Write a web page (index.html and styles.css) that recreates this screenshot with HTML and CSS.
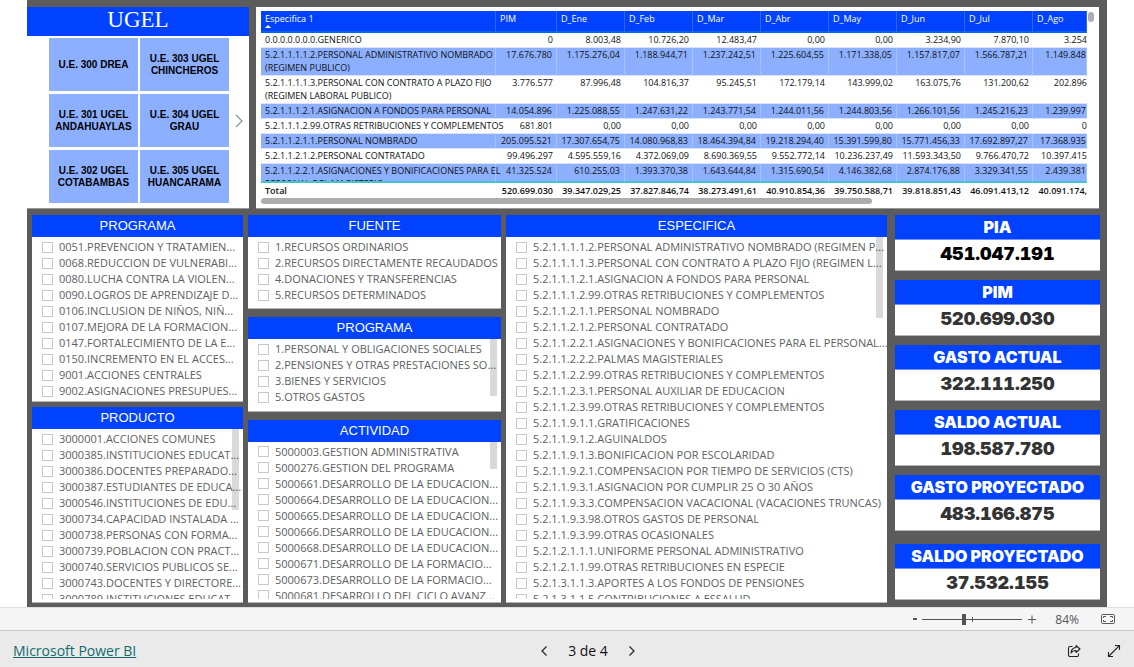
FILE: index.html
```html
<!DOCTYPE html>
<html lang="es">
<head>
<meta charset="utf-8">
<meta name="viewport" content="width=device-width, initial-scale=1">
<title>Microsoft Power BI</title>
<link rel="stylesheet" href="styles.css">
</head>
<body>
<main class="report">
  <div class="top">
    <section class="ugel">
      <h1 class="ugel-title">UGEL</h1>
      <div class="ugel-body">
        <div class="tiles">
          <button class="tile" type="button">U.E. 300 DREA</button>
          <button class="tile" type="button">U.E. 303 UGEL<br>CHINCHEROS</button>
          <button class="tile" type="button">U.E. 301 UGEL<br>ANDAHUAYLAS</button>
          <button class="tile" type="button">U.E. 304 UGEL<br>GRAU</button>
          <button class="tile" type="button">U.E. 302 UGEL<br>COTABAMBAS</button>
          <button class="tile" type="button">U.E. 305 UGEL<br>HUANCARAMA</button>
        </div>
        <button class="tiles-next" type="button" aria-label="Siguiente">
          <svg width="8" height="14" viewBox="0 0 8 14" fill="none" stroke="#8a9099" stroke-width="1.200"><path d="M1 1l6 6-6 6"/></svg>
        </button>
      </div>
    </section>
    <section class="matrix">
      <table class="grid">
        <colgroup><col class="c-name"><col class="c-pim"><col class="c-num"><col class="c-num"><col class="c-num"><col class="c-num"><col class="c-num"><col class="c-num"><col class="c-num"><col></colgroup>
        <thead>
          <tr><th>Especifica 1<span class="sort"></span></th><th>PIM</th><th>D_Ene</th><th>D_Feb</th><th>D_Mar</th><th>D_Abr</th><th>D_May</th><th>D_Jun</th><th>D_Jul</th><th>D_Ago</th></tr>
        </thead>
        <tbody>
          <tr><td>0.0.0.0.0.0.0.GENERICO</td><td>0</td><td>8.003,48</td><td>10.726,20</td><td>12.483,47</td><td>0,00</td><td>0,00</td><td>3.234,90</td><td>7.870,10</td><td>3.254</td></tr>
          <tr><td>5.2.1.1.1.1.2.PERSONAL ADMINISTRATIVO NOMBRADO<br>(REGIMEN PUBLICO)</td><td>17.676.780</td><td>1.175.276,04</td><td>1.188.944,71</td><td>1.237.242,51</td><td>1.225.604,55</td><td>1.171.338,05</td><td>1.157.817,07</td><td>1.566.787,21</td><td>1.149.848</td></tr>
          <tr><td>5.2.1.1.1.1.3.PERSONAL CON CONTRATO A PLAZO FIJO<br>(REGIMEN LABORAL PUBLICO)</td><td>3.776.577</td><td>87.996,48</td><td>104.816,37</td><td>95.245,51</td><td>172.179,14</td><td>143.999,02</td><td>163.075,76</td><td>131.200,62</td><td>202.896</td></tr>
          <tr><td>5.2.1.1.1.2.1.ASIGNACION A FONDOS PARA PERSONAL</td><td>14.054.896</td><td>1.225.088,55</td><td>1.247.631,22</td><td>1.243.771,54</td><td>1.244.011,56</td><td>1.244.803,56</td><td>1.266.101,56</td><td>1.245.216,23</td><td>1.239.997</td></tr>
          <tr><td>5.2.1.1.1.2.99.OTRAS RETRIBUCIONES Y COMPLEMENTOS</td><td>681.801</td><td>0,00</td><td>0,00</td><td>0,00</td><td>0,00</td><td>0,00</td><td>0,00</td><td>0,00</td><td>0</td></tr>
          <tr><td>5.2.1.1.2.1.1.PERSONAL NOMBRADO</td><td>205.095.521</td><td>17.307.654,75</td><td>14.080.968,83</td><td>18.464.394,84</td><td>19.218.294,40</td><td>15.391.599,80</td><td>15.771.456,33</td><td>17.692.897,27</td><td>17.368.935</td></tr>
          <tr><td>5.2.1.1.2.1.2.PERSONAL CONTRATADO</td><td>99.496.297</td><td>4.595.559,16</td><td>4.372.069,09</td><td>8.690.369,55</td><td>9.552.772,14</td><td>10.236.237,49</td><td>11.593.343,50</td><td>9.766.470,72</td><td>10.397.415</td></tr>
          <tr><td><div class="cut">5.2.1.1.2.2.1.ASIGNACIONES Y BONIFICACIONES PARA EL<br>PERSONAL DEL MAGISTERIO</div></td><td>41.325.524</td><td>610.255,03</td><td>1.393.370,38</td><td>1.643.644,84</td><td>1.315.690,54</td><td>4.146.382,68</td><td>2.874.176,88</td><td>3.329.341,55</td><td>2.439.381</td></tr>
        </tbody>
        <tfoot>
          <tr><td>Total</td><td>520.699.030</td><td>39.347.029,25</td><td>37.827.846,74</td><td>38.273.491,61</td><td>40.910.854,36</td><td>39.750.588,71</td><td>39.818.851,43</td><td>46.091.413,12</td><td>40.091.174,</td></tr>
        </tfoot>
      </table>
      <div class="hbar"></div>
      <div class="vbar"></div>
    </section>
  </div>

  <div class="bottom">
    <div class="col col-a">
      <section class="panel p-programa">
        <h2>PROGRAMA</h2>
        <div class="list">
          <label><input type="checkbox">0051.PREVENCION Y TRATAMIEN...</label>
          <label><input type="checkbox">0068.REDUCCION DE VULNERABI...</label>
          <label><input type="checkbox">0080.LUCHA CONTRA LA VIOLEN...</label>
          <label><input type="checkbox">0090.LOGROS DE APRENDIZAJE D...</label>
          <label><input type="checkbox">0106.INCLUSION DE NIÑOS, NIÑ...</label>
          <label><input type="checkbox">0107.MEJORA DE LA FORMACION...</label>
          <label><input type="checkbox">0147.FORTALECIMIENTO DE LA E...</label>
          <label><input type="checkbox">0150.INCREMENTO EN EL ACCES...</label>
          <label><input type="checkbox">9001.ACCIONES CENTRALES</label>
          <label><input type="checkbox">9002.ASIGNACIONES PRESUPUES...</label>
        </div>
      </section>
      <section class="panel p-producto">
        <h2>PRODUCTO</h2>
        <div class="list">
          <span class="thumb thumb-m"></span>
          <label><input type="checkbox">3000001.ACCIONES COMUNES</label>
          <label><input type="checkbox">3000385.INSTITUCIONES EDUCAT...</label>
          <label><input type="checkbox">3000386.DOCENTES PREPARADO...</label>
          <label><input type="checkbox">3000387.ESTUDIANTES DE EDUCA...</label>
          <label><input type="checkbox">3000546.INSTITUCIONES DE EDU...</label>
          <label><input type="checkbox">3000734.CAPACIDAD INSTALADA ...</label>
          <label><input type="checkbox">3000738.PERSONAS CON FORMA...</label>
          <label><input type="checkbox">3000739.POBLACION CON PRACT...</label>
          <label><input type="checkbox">3000740.SERVICIOS PUBLICOS SE...</label>
          <label><input type="checkbox">3000743.DOCENTES Y DIRECTORE...</label>
          <label><input type="checkbox">3000789.INSTITUCIONES EDUCAT...</label>
        </div>
      </section>
    </div>

    <div class="col col-b">
      <section class="panel p-fuente">
        <h2>FUENTE</h2>
        <div class="list">
          <label><input type="checkbox">1.RECURSOS ORDINARIOS</label>
          <label><input type="checkbox">2.RECURSOS DIRECTAMENTE RECAUDADOS</label>
          <label><input type="checkbox">4.DONACIONES Y TRANSFERENCIAS</label>
          <label><input type="checkbox">5.RECURSOS DETERMINADOS</label>
        </div>
      </section>
      <section class="panel p-generica">
        <h2>PROGRAMA</h2>
        <div class="list">
          <span class="thumb thumb-s"></span>
          <label><input type="checkbox">1.PERSONAL Y OBLIGACIONES SOCIALES</label>
          <label><input type="checkbox">2.PENSIONES Y OTRAS PRESTACIONES SO...</label>
          <label><input type="checkbox">3.BIENES Y SERVICIOS</label>
          <label><input type="checkbox">5.OTROS GASTOS</label>
          <label><input type="checkbox" aria-label="Otro"></label>
        </div>
      </section>
      <section class="panel p-actividad">
        <h2>ACTIVIDAD</h2>
        <div class="list">
          <span class="thumb thumb-xs"></span>
          <label><input type="checkbox">5000003.GESTION ADMINISTRATIVA</label>
          <label><input type="checkbox">5000276.GESTION DEL PROGRAMA</label>
          <label><input type="checkbox">5000661.DESARROLLO DE LA EDUCACION...</label>
          <label><input type="checkbox">5000664.DESARROLLO DE LA EDUCACION...</label>
          <label><input type="checkbox">5000665.DESARROLLO DE LA EDUCACION...</label>
          <label><input type="checkbox">5000666.DESARROLLO DE LA EDUCACION...</label>
          <label><input type="checkbox">5000668.DESARROLLO DE LA EDUCACION...</label>
          <label><input type="checkbox">5000671.DESARROLLO DE LA FORMACIO...</label>
          <label><input type="checkbox">5000673.DESARROLLO DE LA FORMACIO...</label>
          <label><input type="checkbox">5000681.DESARROLLO DEL CICLO AVANZ...</label>
        </div>
      </section>
    </div>

    <div class="col col-c">
      <section class="panel p-especifica">
        <h2>ESPECIFICA</h2>
        <div class="list">
          <span class="thumb thumb-m"></span>
          <label><input type="checkbox">5.2.1.1.1.1.2.PERSONAL ADMINISTRATIVO NOMBRADO (REGIMEN P...</label>
          <label><input type="checkbox">5.2.1.1.1.1.3.PERSONAL CON CONTRATO A PLAZO FIJO (REGIMEN L...</label>
          <label><input type="checkbox">5.2.1.1.1.2.1.ASIGNACION A FONDOS PARA PERSONAL</label>
          <label><input type="checkbox">5.2.1.1.1.2.99.OTRAS RETRIBUCIONES Y COMPLEMENTOS</label>
          <label><input type="checkbox">5.2.1.1.2.1.1.PERSONAL NOMBRADO</label>
          <label><input type="checkbox">5.2.1.1.2.1.2.PERSONAL CONTRATADO</label>
          <label><input type="checkbox">5.2.1.1.2.2.1.ASIGNACIONES Y BONIFICACIONES PARA EL PERSONAL...</label>
          <label><input type="checkbox">5.2.1.1.2.2.2.PALMAS MAGISTERIALES</label>
          <label><input type="checkbox">5.2.1.1.2.2.99.OTRAS RETRIBUCIONES Y COMPLEMENTOS</label>
          <label><input type="checkbox">5.2.1.1.2.3.1.PERSONAL AUXILIAR DE EDUCACION</label>
          <label><input type="checkbox">5.2.1.1.2.3.99.OTRAS RETRIBUCIONES Y COMPLEMENTOS</label>
          <label><input type="checkbox">5.2.1.1.9.1.1.GRATIFICACIONES</label>
          <label><input type="checkbox">5.2.1.1.9.1.2.AGUINALDOS</label>
          <label><input type="checkbox">5.2.1.1.9.1.3.BONIFICACION POR ESCOLARIDAD</label>
          <label><input type="checkbox">5.2.1.1.9.2.1.COMPENSACION POR TIEMPO DE SERVICIOS (CTS)</label>
          <label><input type="checkbox">5.2.1.1.9.3.1.ASIGNACION POR CUMPLIR 25 O 30 AÑOS</label>
          <label><input type="checkbox">5.2.1.1.9.3.3.COMPENSACION VACACIONAL (VACACIONES TRUNCAS)</label>
          <label><input type="checkbox">5.2.1.1.9.3.98.OTROS GASTOS DE PERSONAL</label>
          <label><input type="checkbox">5.2.1.1.9.3.99.OTRAS OCASIONALES</label>
          <label><input type="checkbox">5.2.1.2.1.1.1.UNIFORME PERSONAL ADMINISTRATIVO</label>
          <label><input type="checkbox">5.2.1.2.1.1.99.OTRAS RETRIBUCIONES EN ESPECIE</label>
          <label><input type="checkbox">5.2.1.3.1.1.3.APORTES A LOS FONDOS DE PENSIONES</label>
          <label><input type="checkbox">5.2.1.3.1.1.5.CONTRIBUCIONES A ESSALUD</label>
        </div>
      </section>
    </div>

    <div class="cards">
      <section class="card card-strong"><h2>PIA</h2><p>451.047.191</p></section>
      <section class="card"><h2>PIM</h2><p>520.699.030</p></section>
      <section class="card"><h2>GASTO ACTUAL</h2><p>322.111.250</p></section>
      <section class="card"><h2>SALDO ACTUAL</h2><p>198.587.780</p></section>
      <section class="card"><h2>GASTO PROYECTADO</h2><p>483.166.875</p></section>
      <section class="card"><h2>SALDO PROYECTADO</h2><p>37.532.155</p></section>
    </div>
  </div>
</main>

<div class="zoombar">
  <button type="button" aria-label="Alejar"><svg width="6" height="12" viewBox="0 0 6 12"><path d="M1 6h4" stroke="#555" stroke-width="2"/></svg></button>
  <input class="zoom" type="range" min="0" max="100" value="41" aria-label="Zoom">
  <button type="button" aria-label="Acercar"><svg width="8" height="12" viewBox="0 0 8 12"><path d="M0 6.500h8M4 2.500v8" stroke="#555"/></svg></button>
  <span class="percent">84%</span>
  <button type="button" aria-label="Ajustar a la página"><svg width="14" height="12" viewBox="0 0 14 12" fill="none" stroke="#5a5a5a"><rect x=".5" y="1.500" width="13" height="9" rx="1"/><path d="M2.500 5V3.500H5M9 3.500h2.500V5M2.500 7v1.500H5M9 8.500h2.500V7"/></svg></button>
</div>

<footer class="footer">
  <a class="brand" href="#">Microsoft Power BI</a>
  <nav class="pager">
    <button type="button" aria-label="Página anterior"><svg width="6" height="10" viewBox="0 0 6 10" fill="none" stroke="#222" stroke-width="1.200"><path d="M5.500.5L1 5l4.500 4.500"/></svg></button>
    <span>3 de 4</span>
    <button type="button" aria-label="Página siguiente"><svg width="6" height="10" viewBox="0 0 6 10" fill="none" stroke="#222" stroke-width="1.200"><path d="M.5.5L5 5 .5 9.500"/></svg></button>
  </nav>
  <div class="tools">
    <button type="button" aria-label="Compartir"><svg width="14" height="14" viewBox="0 0 14 14" fill="none" stroke="#222" stroke-width="1.100"><path d="M5.500 2.500H3A1.500 1.500 0 0 0 1.500 4v7A1.500 1.500 0 0 0 3 12.500h7a1.500 1.500 0 0 0 1.500-1.500V9.500"/><path d="M9 1.500l4 3.500-4 3.500v-2C6.500 6.500 5 7.300 4 9c.2-3 2-5.300 5-5.500z" stroke-linejoin="round"/></svg></button>
    <button type="button" aria-label="Pantalla completa"><svg width="14" height="14" viewBox="0 0 14 14" fill="none" stroke="#222" stroke-width="1.100"><path d="M1.500 12.500l11-11M8 1.500h4.500V6M1.500 8v4.500H6"/></svg></button>
  </div>
</footer>
</body>
</html>
```
FILE: styles.css
```css
:root {
  --blue: #0042ff;
  --light: #8cb0ff;
  --frame: #5c5c5c;
  --ui: "Open Sans", "Noto Sans", sans-serif;
  --arial: "Liberation Sans", Arial, sans-serif;
  --heavy: Inter, "Liberation Sans", sans-serif;
}

* { box-sizing: border-box; }

body {
  margin: 0;
  min-height: 100vh;
  display: flex;
  flex-direction: column;
  background: #fff;
  font-family: var(--ui);
}

h1, h2, p { margin: 0; font-weight: 400; }

button {
  margin: 0;
  padding: 0;
  border: 0;
  background: none;
  font: inherit;
  color: inherit;
}

svg { display: block; }

/* Report canvas */
.report {
  flex: 1;
  display: flex;
  flex-direction: column;
  gap: 6px;
  margin: 0 27px;
  padding: 7px 0 4px;
  background: var(--frame);
}

.top {
  display: grid;
  grid-template-columns: minmax(0, 222fr) minmax(0, 843fr);
  gap: 7px;
  padding-right: 8px;
}

.ugel, .matrix { background: #fff; border-bottom: 1px solid #999; }

.ugel-title {
  background: var(--blue);
  color: #fff;
  font: 23px/25px "Liberation Serif", serif;
  padding-bottom: 4px;
  text-align: center;
}

.ugel-body {
  display: flex;
  align-items: center;
  gap: 6px;
  padding: 2px 6px 5px 22px;
}

.tiles {
  flex: 1;
  display: grid;
  grid-template-columns: 1fr 1fr;
  grid-auto-rows: 53px;
  gap: 3px 2px;
}

.tile {
  background: var(--light);
  color: #000;
  font: 700 10px/12px var(--arial);
}

/* Matrix */
.matrix { position: relative; padding: 4px 12px 3px 5px; }

.grid {
  width: 100%;
  table-layout: fixed;
  border-collapse: separate;
  border-spacing: 0;
  font-size: 9px;
  line-height: 13px;
  color: #111;
}

.c-name { width: 235px; }
.c-pim { width: 61px; }
.c-num { width: 68px; }

.grid th {
  height: 22px;
  padding: 1px 4px 0;
  background: var(--blue);
  border-bottom: 2px solid #0b63e8;
  border-right: 1px solid #2e66ff;
  color: #fff;
  font-weight: 400;
  text-align: left;
  vertical-align: top;
}

.sort {
  display: block;
  width: 0;
  border: 3px solid transparent;
  border-top: 0;
  border-bottom-color: #fff;
}

.grid td {
  padding: 0 4px 1px;
  border-bottom: 1px solid #dbe3f4;
  white-space: nowrap;
  text-align: right;
  vertical-align: top;
}

.grid td:first-child { text-align: left; padding-right: 0; }
.grid td:last-child { padding-right: 0; padding-left: 0; }

.grid tbody tr:nth-child(even) td { background: var(--light); border-right: 1px solid #a6c1fb; }

.cut { height: 17px; overflow-x: visible; overflow-y: clip; }

.grid tbody tr:last-child td { padding-bottom: 0; border-bottom: 2px solid #3fc5cb; }

.grid tfoot td { padding-top: 1px; border: 0; font-weight: 600; }

.hbar {
  width: 74%;
  height: 6px;
  border-radius: 3px;
  background: #adadad;
}

.vbar {
  position: absolute;
  top: 5px;
  right: 5px;
  width: 6px;
  height: 10px;
  border-radius: 3px;
  background: #adadad;
}

/* Slicers */
.bottom {
  flex: 1;
  display: grid;
  grid-template-columns: minmax(0, 211fr) minmax(0, 253fr) minmax(0, 381fr) minmax(0, 208fr);
  gap: 5px;
  padding: 0 7px 0 5px;
}

.col { display: flex; flex-direction: column; gap: 5px; }
.col-b { gap: 8px; }

.panel {
  flex: 1 1 0;
  min-height: 0;
  display: flex;
  flex-direction: column;
  padding-bottom: 3px;
  background: #fff;
  border-bottom: 1px solid #b5b5b5;
}

.p-programa { flex-grow: 183; }
.p-producto { flex-grow: 191; }
.p-fuente, .p-generica { flex-grow: 90; }
.p-actividad { flex-grow: 179; }

.panel h2 {
  flex: none;
  background: var(--blue);
  color: #fff;
  font: 13px/22px var(--arial);
  text-align: center;
}

.list {
  position: relative;
  flex: 1 1 0;
  min-height: 0;
  overflow: hidden;
  padding: 2px 0 0 10px;
}

.list label {
  display: flex;
  align-items: center;
  gap: 6px;
  height: 16px;
  font-size: 11px;
  line-height: 16px;
  color: #606060;
  white-space: nowrap;
}

.list input {
  appearance: none;
  flex: none;
  width: 11px;
  height: 11px;
  margin: 0;
  border: 1px solid #c8c8c8;
  background: #fff;
}

.thumb {
  position: absolute;
  top: 0;
  right: 4px;
  width: 7px;
  background: rgba(0, 0, 0, 0.15);
}

.thumb-m { height: 81px; }
.thumb-s { height: 57px; }
.thumb-xs { height: 27px; }

/* Figures */
.cards { display: flex; flex-direction: column; gap: 9px; padding-left: 3px; }

.card {
  background: #fff;
  border-bottom: 1px solid #b5b5b5;
  padding-bottom: 3px;
  text-align: center;
  color: #333;
}

.card:last-child { margin-top: 4px; }
.card-strong { color: #000; }

.card h2 {
  background: var(--blue);
  border-bottom: 1px solid #6e93ff;
  color: #fff;
  font: 900 16px/24px var(--heavy);
}

.card p {
  font: 900 18px/27px var(--heavy);
  font-variant-numeric: tabular-nums;
}

/* Zoom bar */
.zoombar {
  display: flex;
  align-items: center;
  justify-content: flex-end;
  height: 23px;
  padding-right: 19px;
  background: #f5f5f5;
  border-top: 1px solid #e0e0e0;
  color: #555;
}

.zoom {
  appearance: none;
  width: 100px;
  height: 12px;
  margin: 0 6px 0 4px;
  background:
    linear-gradient(#555, #555) 50px 4px / 1px 5px no-repeat,
    linear-gradient(#555, #555) 0 6px / 100% 1px no-repeat;
}

.zoom::-webkit-slider-thumb {
  appearance: none;
  width: 4px;
  height: 11px;
  background: #555;
}

.percent { margin: 0 22px 0 19px; font-size: 12px; }

/* Footer */
.footer {
  display: grid;
  grid-template-columns: 1fr auto 1fr;
  align-items: center;
  height: 37px;
  padding: 3px 13px 0;
  background: #eaeaea;
  border-top: 1px solid #c8c8c8;
}

.brand { font-size: 14px; color: #116a6f; }

.pager {
  display: flex;
  align-items: center;
  gap: 21px;
  margin-left: 42px;
  font-size: 14px;
  color: #111;
}

.tools { display: flex; justify-content: flex-end; gap: 26px; }
```
